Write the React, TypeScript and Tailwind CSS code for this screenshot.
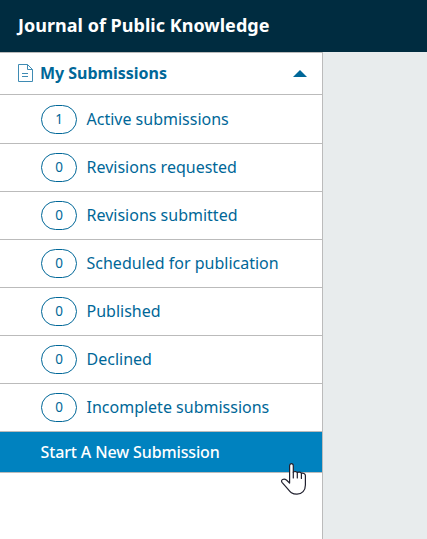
const items = [
  { count: 1, label: "Active submissions" },
  { count: 0, label: "Revisions requested" },
  { count: 0, label: "Revisions submitted" },
  { count: 0, label: "Scheduled for publication" },
  { count: 0, label: "Published" },
  { count: 0, label: "Declined" },
  { count: 0, label: "Incomplete submissions" },
];

function DocumentIcon() {
  return (
    <svg className="mr-[7px] mb-px h-[19px] w-4" viewBox="0 0 16 19" fill="none" stroke="#3f8bb3">
      <path d="M1.5 .5H10.5L15.5 5.5V17.5H1.5Z" />
      <path d="M10.5 .5V5.5H15.5M5 9.5H11M5 12.5H11" />
    </svg>
  );
}

function HandCursor() {
  return (
    <svg className="absolute top-[463px] left-[280px] h-8 w-7" viewBox="0 0 28 32" fill="#fff" stroke="#20202e" strokeWidth="1.2" strokeLinejoin="round" strokeLinecap="round">
      <path d="M9.6 17.4V2.7C9.6-.1 13.3-.1 13.3 2.7V9.2C14.3 8.2 17 8.3 17.3 9.6C18.4 8.9 20.9 9 21.4 10.4C23 9.8 25.4 10.6 25.4 12.6V22C25.4 27.5 22 31.2 17 31.2C12 31.2 10.2 29 7.5 25.6L2 19.3C.2 16.8 4 15 6.4 17L9.6 20Z" />
      <path d="M13.3 9.2V15M17.3 9.6V15M21.4 10.4V15.5" fill="none" />
    </svg>
  );
}

export default function App() {
  return (
    <div className="relative flex h-[539px] w-[427px] flex-col overflow-hidden bg-[#e8eced] font-['Noto_Sans',sans-serif] text-[#006798]">
      <header className="flex h-[52px] shrink-0 items-center bg-[#002c40] pb-[2px] pl-[18px] text-lg font-bold text-white">
        <h1 className="whitespace-nowrap tracking-[0.02px]">Journal of Public Knowledge</h1>
      </header>
      <nav className="w-[323px] grow border-t border-r border-[#bbb] bg-white">
        <div className="flex h-[42px] items-center border-b border-[#bbb] pr-[15px] pl-[17px]">
          <DocumentIcon />
          <span className="pb-[2px] text-base font-bold tracking-[-0.03px]">My Submissions</span>
          <svg className="ml-auto h-[7px] w-[14px]" viewBox="0 0 14 7" fill="#006798">
            <path d="M0 7L7 0L14 7Z" />
          </svg>
        </div>
        <ul>
          {items.map((item) => (
            <li key={item.label} className="flex h-12 items-center border-b border-[#bbb] pl-[41px] first:h-[49px]">
              <span className="mr-[9.5px] flex h-[29px] w-9 items-center justify-center rounded-full border border-[#006798] text-[13.5px]">
                {item.count}
              </span>
              <span className="pb-px text-base whitespace-nowrap">{item.label}</span>
            </li>
          ))}
        </ul>
        <a className="flex h-[41px] items-center border-b border-[#bbb] bg-[#0082bf] pl-[40.5px] text-base font-medium tracking-[-0.13px] text-white">
          Start A New Submission
        </a>
      </nav>
      <HandCursor />
    </div>
  );
}
